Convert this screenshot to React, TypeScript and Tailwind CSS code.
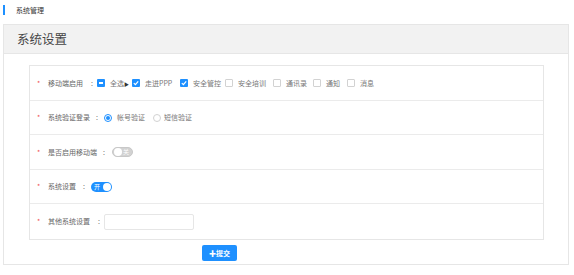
import React from "react";

const font = { fontFamily: '"Microsoft YaHei", "Noto Sans CJK SC", sans-serif' };

function Check({ state }: { state: "on" | "off" | "half" }) {
  if (state === "off")
    return <span className="inline-block w-[8px] h-[8px] border border-[#d2d2d2] rounded-[1px] bg-white" />;
  return (
    <span className="inline-flex items-center justify-center w-[8px] h-[8px] rounded-[1px] bg-[#1e90ff]">
      {state === "half" ? (
        <span className="block w-[4px] h-[1.5px] bg-white" />
      ) : (
        <svg width="6" height="6" viewBox="0 0 6 6">
          <path d="M0.8 3.1 L2.4 4.6 L5.2 1.3" stroke="white" strokeWidth="1.2" fill="none" />
        </svg>
      )}
    </span>
  );
}

function Row({ label, colonGap, children, last }: { label: string; colonGap: string; children: React.ReactNode; last?: boolean }) {
  return (
    <div className={`flex items-center h-full pl-[7px] ${last ? "" : "border-b border-[#ebebeb]"}`}>
      <span className="text-[#f05050] text-[7px] w-[11px]">*</span>
      <span className="text-[7px] text-[#666]">{label}</span>
      <span className={`text-[7px] text-[#666] ${colonGap}`}>:</span>
      {children}
    </div>
  );
}

export default function App() {
  const items: { t: string; s: "on" | "off" | "half"; w: string; arrow?: boolean }[] = [
    { t: "全选", s: "half", w: "w-[35px]", arrow: true },
    { t: "走进PPP", s: "on", w: "w-[48px]" },
    { t: "安全管控", s: "on", w: "w-[45px]" },
    { t: "安全培训", s: "off", w: "w-[48px]" },
    { t: "通讯录", s: "off", w: "w-[40px]" },
    { t: "通知", s: "off", w: "w-[34px]" },
    { t: "消息", s: "off", w: "w-[30px]" },
  ];
  return (
    <div className="w-[574px] h-[275px] bg-white overflow-hidden" style={font}>
      <div className="flex items-center pt-[5px] pl-[3px] h-[15px]">
        <span className="block w-[2px] h-[10px] bg-[#1e90ff]" />
        <span className="ml-[11px] text-[7px] text-[#333] mt-[1px]">系统管理</span>
      </div>
      <div className="ml-[3px] mt-[9px] w-[566px] h-[241px] border border-[#e6e6e6] flex flex-col">
        <div className="h-[29px] bg-[#f2f2f2] border-b border-[#e6e6e6] flex items-center pl-[13px]">
          <span className="text-[12.5px] text-[#444]">系统设置</span>
        </div>
        <div className="ml-[25px] mt-[11px] w-[515px] h-[175px] border border-[#e6e6e6] grid grid-rows-[35px_34px_35px_34px_1fr]">
          <Row label="移动端启用" colonGap="ml-[8px] mr-[4px]">
            <div className="flex items-center">
              {items.map((it) => (
                <div key={it.t} className={`flex items-center shrink-0 ${it.w}`}>
                  <Check state={it.s} />
                  <span className="ml-[5px] text-[7px] text-[#777] whitespace-nowrap">{it.t}</span>
                  {it.arrow && <span className="text-[5px] text-[#333] leading-none">▶</span>}
                </div>
              ))}
            </div>
          </Row>
          <Row label="系统验证登录" colonGap="ml-[6px] mr-[6px]">
            <div className="flex items-center">
              <span className="flex items-center justify-center w-[8px] h-[8px] rounded-full border border-[#1e90ff] bg-white">
                <span className="block w-[4px] h-[4px] rounded-full bg-[#1e90ff]" />
              </span>
              <span className="ml-[5px] text-[7px] text-[#777] w-[36px]">帐号验证</span>
              <span className="w-[8px] h-[8px] rounded-full border border-[#d2d2d2] bg-white" />
              <span className="ml-[3px] text-[7px] text-[#777]">短信验证</span>
            </div>
          </Row>
          <Row label="是否启用移动端" colonGap="ml-[6px] mr-[7px]">
            <span className="relative flex items-center w-[21px] h-[10px] rounded-full bg-[#d2d2d2] border border-[#c8c8c8]">
              <span className="absolute left-[1px] w-[8px] h-[8px] rounded-full bg-white" />
              <span className="ml-[10px] text-[6px] text-white leading-none">关</span>
            </span>
          </Row>
          <Row label="系统设置" colonGap="ml-[7px] mr-[6px]">
            <span className="relative flex items-center w-[21px] h-[10px] rounded-full bg-[#1e90ff]">
              <span className="ml-[3px] text-[6px] text-white leading-none">开</span>
              <span className="absolute right-[1px] w-[8px] h-[8px] rounded-full bg-white" />
            </span>
          </Row>
          <Row label="其他系统设置" colonGap="ml-[8px] mr-[4px]" last>
            <span className="block w-[90px] h-[16px] border border-[#e6e6e6] rounded-[2px] bg-white" />
          </Row>
        </div>
        <div className="ml-[198px] mt-[5px]">
          <button className="w-[35px] h-[16px] bg-[#1e90ff] rounded-[2px] text-white text-[7px] font-bold flex items-center justify-center">
            ✚提交
          </button>
        </div>
      </div>
    </div>
  );
}
